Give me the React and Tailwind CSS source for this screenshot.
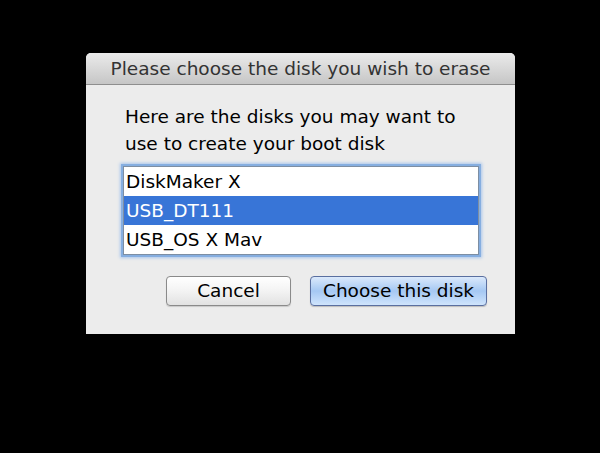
import React, { useState } from "react";

const disks = ["DiskMaker X", "USB_DT111", "USB_OS X Mav"];

export default function App() {
  const [selected, setSelected] = useState(1);

  return (
    <div
      className="w-[600px] h-[453px] bg-black pt-[53px] pl-[86px]"
      style={{ fontFamily: '"DejaVu Sans", "Noto Sans", sans-serif' }}
    >
      <div className="w-[429px] h-[281px] bg-[#ececec] rounded-t-[5px] flex flex-col">
        {/* title bar */}
        <div className="h-[32px] rounded-t-[5px] bg-gradient-to-b from-[#ebebeb] to-[#c6c6c6] border-b border-[#8e8e8e] flex items-center justify-center">
          <span className="text-[18.5px] text-[#333333]">
            Please choose the disk you wish to erase
          </span>
        </div>

        <div className="flex flex-col pl-[37px] pr-[28px] pt-[18px]">
          <p className="text-[18.5px] leading-[27px] text-black pl-[2px]">
            Here are the disks you may want to
            <br />
            use to create your boot disk
          </p>

          <div className="mt-[9px] w-[356px] border border-[#7d8ea3] shadow-[0_0_0_2px_#86aee0,0_0_3px_3px_#a9c6ec] bg-white">
            {disks.map((d, i) => (
              <div
                key={d}
                onClick={() => setSelected(i)}
                className={
                  "h-[29px] flex items-center pl-[2px] text-[18.5px] " +
                  (i === selected ? "bg-[#3875d7] text-white" : "text-black")
                }
              >
                {d}
              </div>
            ))}
          </div>

          <div className="flex justify-end gap-[19px] mt-[21px]">
            <button className="w-[125px] h-[30px] rounded-[4px] border border-[#8a8a8a] bg-gradient-to-b from-[#ffffff] via-[#f3f3f3] to-[#e2e2e2] text-[18.5px] text-black shadow-[0_1px_1px_rgba(0,0,0,0.15)]">
              Cancel
            </button>
            <button className="w-[177px] h-[30px] rounded-[4px] border border-[#5a6fa0] bg-gradient-to-b from-[#dbe9fb] via-[#a5c8f3] to-[#cfe4fc] text-[18.5px] text-black shadow-[0_1px_1px_rgba(0,0,0,0.2)]">
              Choose this disk
            </button>
          </div>
        </div>
      </div>
    </div>
  );
}
